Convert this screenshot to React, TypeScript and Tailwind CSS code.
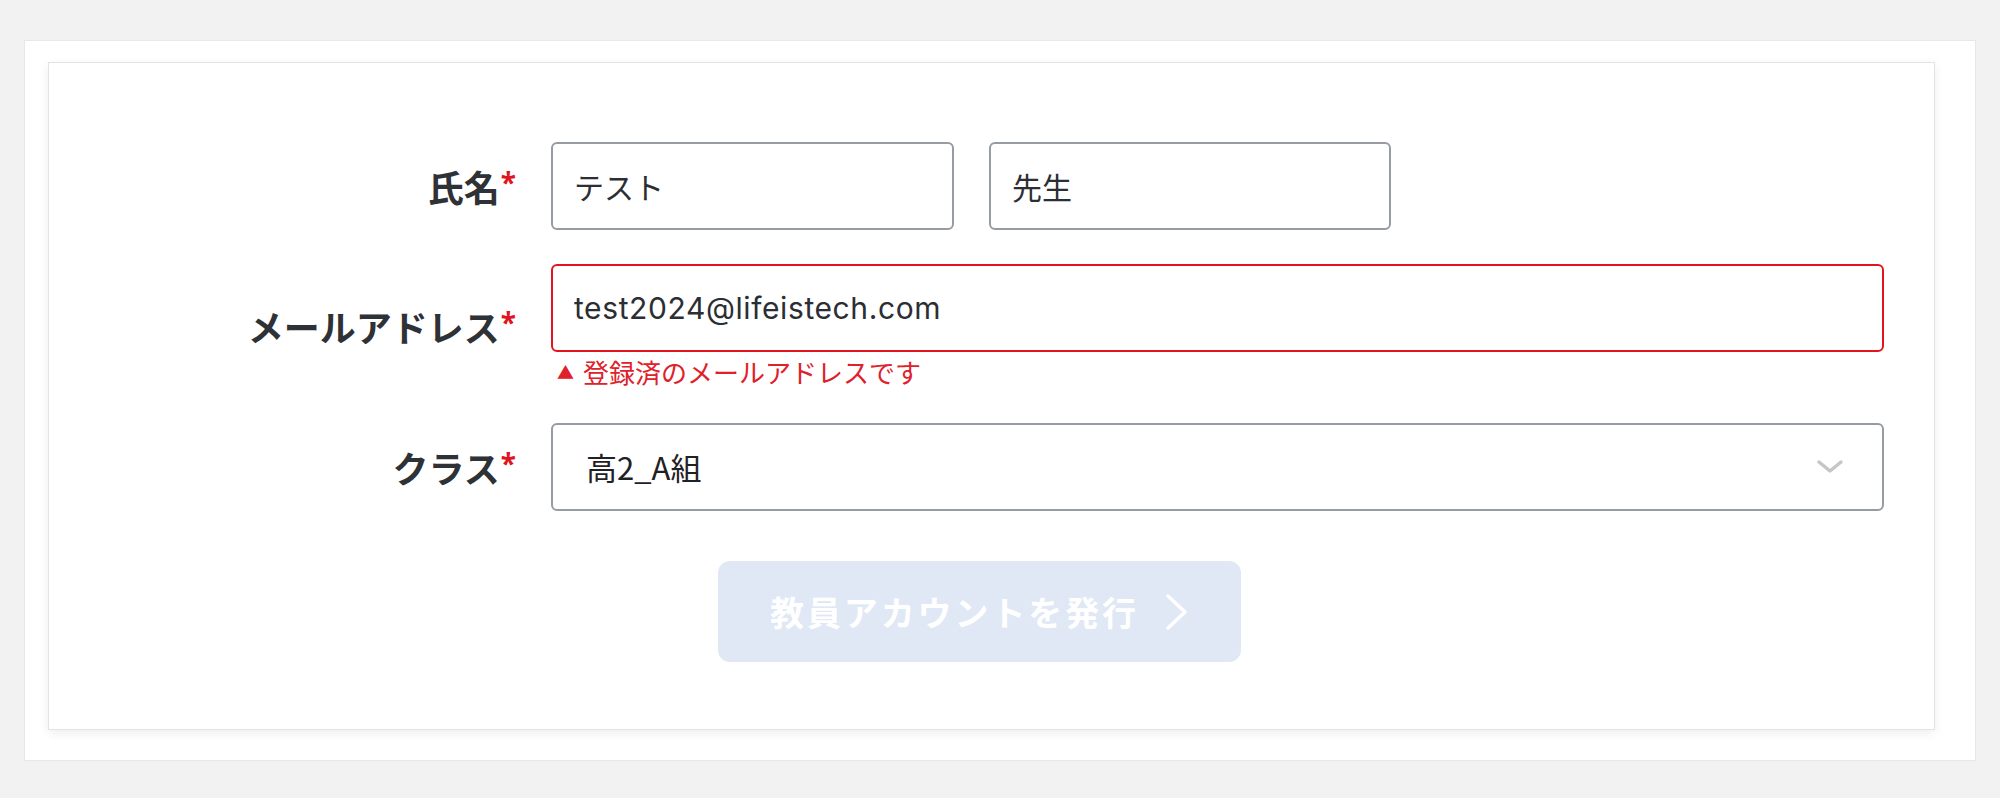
const font = "font-['Inter','Noto_Sans_CJK_JP',sans-serif]";

function Label({ text }: { text: string }) {
  return (
    <div className="w-[468px] shrink-0 flex justify-end items-center pr-[1px]">
      <span className="text-[36px] leading-none font-bold text-[#2e3135] font-['Noto_Sans_CJK_JP',sans-serif]">
        {text}
      </span>
      <span className="text-[28px] leading-none font-bold text-[#e0141e] ml-[1px] -mt-[8px] font-['Noto_Sans',sans-serif]">
        *
      </span>
    </div>
  );
}

const inputBase =
  'h-[88px] rounded-[6px] border-2 bg-white px-[21px] text-[30px] text-[#2b2e33] outline-none';

export default function App() {
  return (
    <div className={`min-h-screen bg-[#f2f2f2] pt-[40px] px-[24px] ${font}`}>
      <div className="bg-white border border-[#e8e8e8] h-[721px] pt-[21px] pl-[23px] pr-[40px]">
        <div className="bg-white border border-[#e3e3e3] shadow-[0_3px_10px_rgba(0,0,0,0.07)] h-[668px] pt-[79px]">
          {/* 氏名 */}
          <div className="flex items-center">
            <Label text="氏名" />
            <div className="ml-[34px] flex gap-[35px]">
              <input
                readOnly
                defaultValue="テスト"
                className={`${inputBase} w-[403px] border-[#969ca2] font-['Noto_Sans_CJK_JP',sans-serif]`}
              />
              <input
                readOnly
                defaultValue="先生"
                className={`${inputBase} w-[402px] border-[#969ca2] font-['Noto_Sans_CJK_JP',sans-serif]`}
              />
            </div>
          </div>

          {/* メールアドレス */}
          <div className="flex items-center mt-[34px]">
            <Label text="メールアドレス" />
            <div className="ml-[34px]">
              <input
                readOnly
                defaultValue="test2024@lifeistech.com"
                className={`${inputBase} w-[1333px] border-[#e3141e] tracking-[0.02em]`}
              />
              <p className="mt-[4px] ml-[6px] flex items-center text-[26px] leading-[32px] text-[#e0202a] font-['Noto_Sans_CJK_JP',sans-serif]">
                <span className="text-[17px] mr-[9px]">▲</span>
                登録済のメールアドレスです
              </p>
            </div>
          </div>

          {/* クラス */}
          <div className="flex items-center mt-[35px]">
            <Label text="クラス" />
            <div className="ml-[34px] relative w-[1333px]">
              <select
                defaultValue="a"
                className="appearance-none w-full h-[88px] rounded-[6px] border-2 border-[#969ca2] bg-white pl-[33px] text-[31px] text-[#1f2124] outline-none font-['Noto_Sans_CJK_JP',sans-serif]"
              >
                <option value="a">高2_A組</option>
              </select>
              <svg
                width="28"
                height="16"
                viewBox="0 0 28 16"
                fill="none"
                className="absolute right-[40px] top-1/2 -translate-y-1/2 pointer-events-none"
              >
                <polyline
                  points="3,3 14,12 25,3"
                  stroke="#c6c6c6"
                  strokeWidth="3.5"
                  strokeLinecap="round"
                  strokeLinejoin="round"
                />
              </svg>
            </div>
          </div>

          {/* 発行ボタン */}
          <button
            disabled
            className="mt-[50px] ml-[669px] w-[523px] h-[101px] rounded-[12px] bg-[#dfe8f4] flex items-center justify-center gap-[26px] text-white"
          >
            <span className="text-[34px] font-bold tracking-[0.085em] font-['Noto_Sans_CJK_JP',sans-serif]">
              教員アカウントを発行
            </span>
            <svg width="24" height="38" viewBox="0 0 24 38" fill="none">
              <polyline
                points="3,3 20,19 3,35"
                stroke="#ffffff"
                strokeWidth="3.5"
                strokeLinecap="round"
                strokeLinejoin="round"
              />
            </svg>
          </button>
        </div>
      </div>
    </div>
  );
}
